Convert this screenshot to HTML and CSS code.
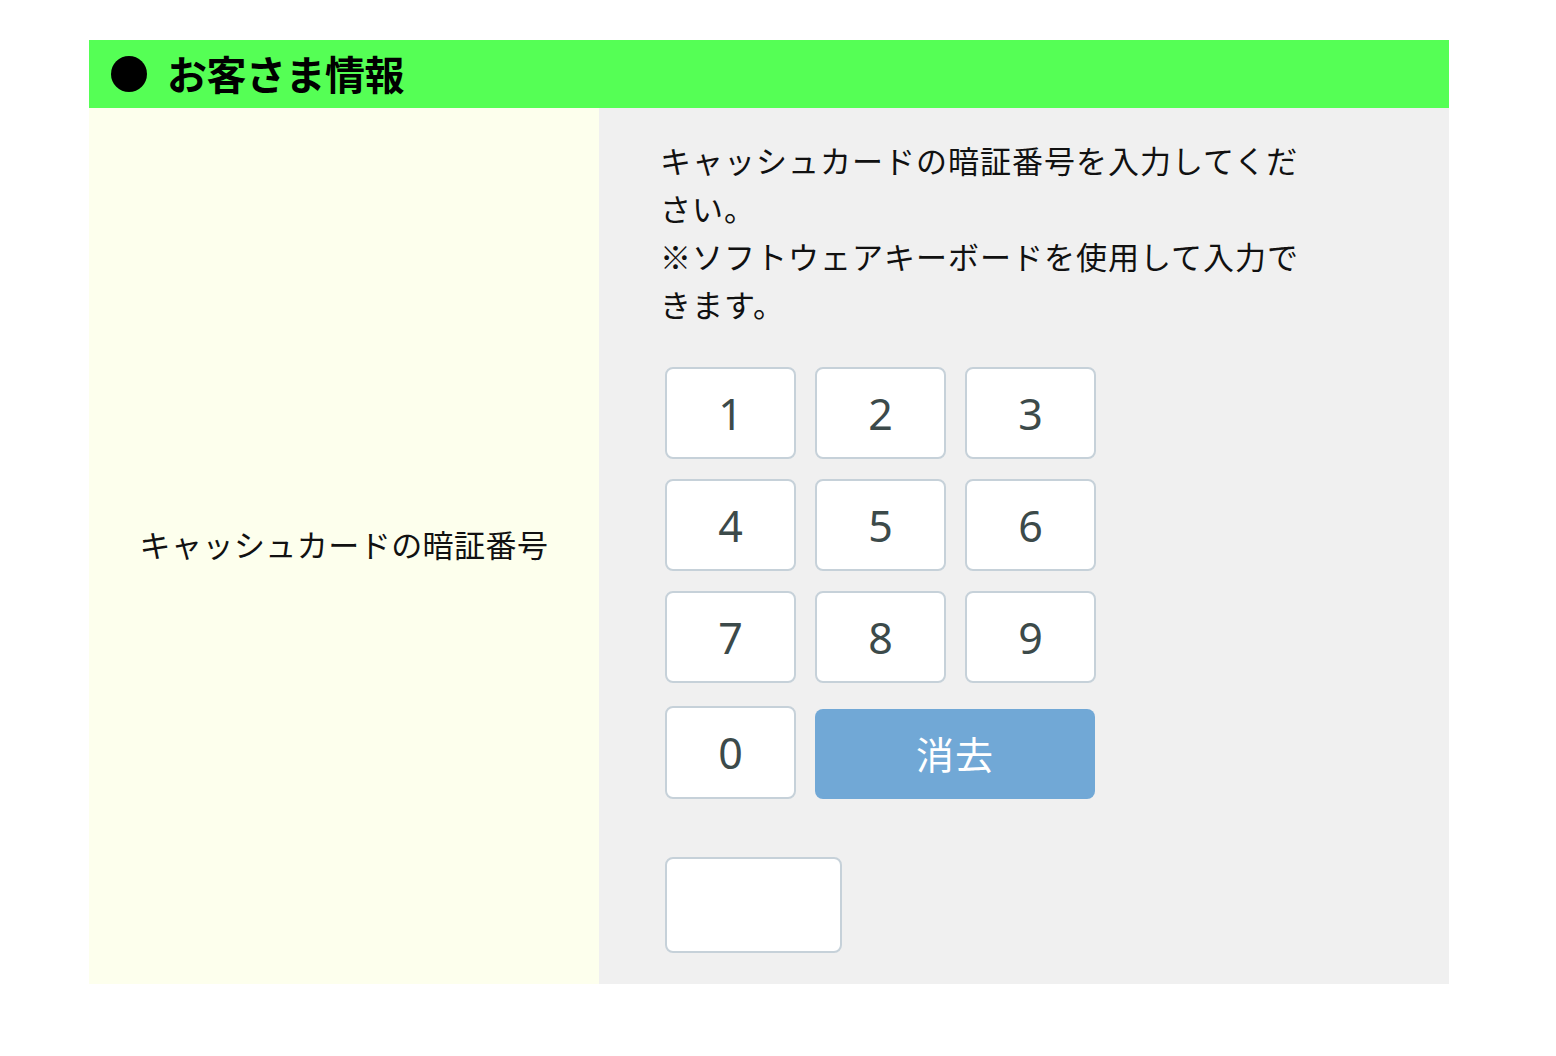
FILE: index.html
```html
<!DOCTYPE html>
<html lang="ja">
<head>
<meta charset="utf-8">
<title>お客さま情報</title>
<link rel="stylesheet" href="styles.css">
</head>
<body>
<section class="panel">
  <h2 class="panel-title">お客さま情報</h2>
  <div class="row">
    <div class="label-cell">キャッシュカードの暗証番号</div>
    <div class="field-cell">
      <p class="note">キャッシュカードの暗証番号を入力してください。<br>※ソフトウェアキーボードを使用して入力できます。</p>
      <div class="keypad">
        <div class="key-row">
          <button class="key">1</button>
          <button class="key">2</button>
          <button class="key">3</button>
        </div>
        <div class="key-row">
          <button class="key">4</button>
          <button class="key">5</button>
          <button class="key">6</button>
        </div>
        <div class="key-row">
          <button class="key">7</button>
          <button class="key">8</button>
          <button class="key">9</button>
        </div>
        <div class="key-row last">
          <button class="key">0</button>
          <button class="clear">消去</button>
        </div>
      </div>
      <input class="pin-input" type="password">
    </div>
  </div>
</section>
</body>
</html>
```
FILE: styles.css
```css
html, body {
  margin: 0;
  padding: 0;
  background: #ffffff;
}
body {
  font-family: "Noto Sans CJK JP", "Noto Sans", sans-serif;
  color: #111111;
}
.panel {
  width: 1360px;
  margin: 40px 0 0 89px;
}
.panel-title {
  margin: 0;
  height: 68px;
  box-sizing: border-box;
  background: #55ff55;
  display: flex;
  align-items: center;
  padding: 0 0 3px 22px;
  gap: 20px;
  font-size: 40px;
  font-weight: 700;
  color: #000000;
  line-height: 1;
  letter-spacing: -0.5px;
}
.panel-title::before {
  content: "";
  width: 36px;
  height: 36px;
  margin-top: 3px;
  border-radius: 50%;
  background: #000000;
  flex: none;
}
.row {
  display: grid;
  grid-template-columns: 510px 850px;
}
.label-cell {
  background: #fdffed;
  display: flex;
  align-items: center;
  justify-content: center;
  padding-bottom: 4px;
  font-size: 31px;
  letter-spacing: 0.45px;
  line-height: 48px;
  color: #111111;
}
.field-cell {
  background: #f0f0f0;
  padding: 28px 40px 31px 61px;
}
.note {
  margin: 0;
  width: 660px;
  font-size: 31px;
  letter-spacing: 1px;
  line-height: 48px;
  color: #111111;
}
.keypad {
  margin: 39px 0 0 5px;
  display: flex;
  flex-direction: column;
  gap: 20px;
}
.key-row {
  display: flex;
  gap: 19px;
}
.key-row.last {
  align-items: flex-end;
  margin-top: 3px;
}
.key {
  width: 131px;
  height: 92px;
  box-sizing: border-box;
  border: 2px solid #c6d1d9;
  border-radius: 8px;
  background: #ffffff;
  font-family: "Noto Sans", "Open Sans", sans-serif;
  font-size: 43px;
  color: #3c4a4a;
  padding: 0;
  line-height: 1;
}
.key-row.last .key {
  height: 93px;
}
.clear {
  width: 280px;
  height: 90px;
  border: none;
  border-radius: 8px;
  background: #71a8d6;
  color: #ffffff;
  font-family: "Noto Sans CJK JP", sans-serif;
  font-size: 38px;
  letter-spacing: 1px;
  padding: 0 0 2px;
  line-height: 1;
}
.pin-input {
  display: block;
  margin: 58px 0 0 5px;
  width: 177px;
  height: 96px;
  box-sizing: border-box;
  border: 2px solid #c6d1d9;
  border-radius: 8px;
  background: #ffffff;
  padding: 0 10px;
  font-size: 32px;
}
```
